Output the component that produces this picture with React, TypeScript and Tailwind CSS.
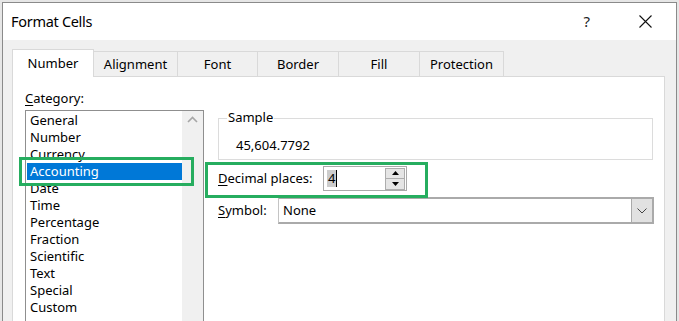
import React from "react";

const items = [
  "General",
  "Number",
  "Currency",
  "Accounting",
  "Date",
  "Time",
  "Percentage",
  "Fraction",
  "Scientific",
  "Text",
  "Special",
  "Custom",
];

const tabs = ["Alignment", "Font", "Border", "Fill", "Protection"];
const tabWidths = ["w-[84px]", "w-[80px]", "w-[81px]", "w-[81px]", "w-[84px]"];

export default function App() {
  return (
    <div
      className="relative w-[679px] h-[321px] overflow-hidden bg-[#e6e6e6] pl-[2px] pt-[2px] text-black"
      style={{ fontFamily: '"Noto Sans", "Open Sans", sans-serif' }}
    >
      <div className="w-[675px] h-[340px] border-l border-r border-t border-[#8a8a8a] bg-[#f0f0f0]">
        {/* Title bar */}
        <div className="h-[37px] bg-white flex items-center pl-[8px] pr-[24px]">
          <div className="text-[14.5px] leading-none tracking-[-0.3px]">Format Cells</div>
          <div className="flex-1" />
          <div className="text-[15px] leading-none text-[#222] mr-[49px]">?</div>
          <svg width="13" height="13" viewBox="0 0 13 13">
            <path d="M0.5 0.5 L12.5 12.5 M12.5 0.5 L0.5 12.5" stroke="#111" strokeWidth="1.1" />
          </svg>
        </div>
        {/* Body */}
        <div className="pt-[9px] pl-[9px] pr-[11px]">
          {/* Tabs */}
          <div className="flex items-end h-[27px] text-[13px] relative z-10">
            <div className="w-[82px] h-[28px] -mb-px bg-white border border-b-0 border-[#d9d9d9] flex items-center justify-center pt-[1px]">
              Number
            </div>
            {tabs.map((t, i) => (
              <div
                key={t}
                className={`${tabWidths[i]} h-[25px] bg-[#f0f0f0] border border-l-0 border-b-0 border-[#d9d9d9] flex items-center justify-center pt-[1px]`}
              >
                {t}
              </div>
            ))}
          </div>
          {/* Panel */}
          <div className="relative bg-white border border-[#d9d9d9] h-[260px] pt-[13px] pl-[12px] flex text-[13px]">
            {/* Left column */}
            <div className="w-[179px] flex flex-col">
              <div className="h-[17px] leading-[17px] mb-[3px]">
                <span className="underline underline-offset-2">C</span>ategory:
              </div>
              <div className="border border-[#8f8f8f] h-[240px] flex">
                <div className="flex-1 pt-[1px] pl-[1px]">
                  {items.map((it) => (
                    <div
                      key={it}
                      className={`h-[17px] leading-[17px] pl-[3px] ${
                        it === "Accounting" ? "bg-[#0078d7] text-white" : ""
                      }`}
                    >
                      {it}
                    </div>
                  ))}
                </div>
                <div className="w-[21px] bg-[#f0f0f0] flex justify-center pt-[5px]">
                  <svg width="11" height="7" viewBox="0 0 11 7">
                    <path d="M1 6 L5.5 1.5 L10 6" stroke="#a6a6a6" strokeWidth="1.6" fill="none" />
                  </svg>
                </div>
              </div>
            </div>
            {/* Right column */}
            <div className="ml-[14px] pt-[28px] flex flex-col">
              <div className="relative w-[435px] h-[42px] border border-[#dcdcdc] pl-[17px] pt-[18px]">
                <div className="absolute left-[8px] top-[-10px] bg-white px-[1px] h-[17px] leading-[17px]">
                  Sample
                </div>
                <div className="h-[17px] leading-[17px]">45,604.7792</div>
              </div>
              <div className="mt-[6px] flex items-center h-[25px]">
                <div className="w-[105px]">
                  <span className="underline underline-offset-2">D</span>ecimal places:
                </div>
                <div className="w-[84px] h-[25px] border border-[#a9a9a9] flex items-center pl-[3px] pr-[1px]">
                  <div className="flex-1 flex items-center">
                    <span className="bg-[#cccccc] px-[1px] h-[17px] leading-[17px]">4</span>
                    <span className="w-px h-[17px] bg-black" />
                  </div>
                  <div className="flex flex-col w-[20px] gap-0">
                    <div className="h-[11px] bg-[#e5e5e5] border border-[#adadad] flex items-center justify-center">
                      <svg width="7" height="4" viewBox="0 0 7 4">
                        <path d="M0 4 L3.5 0 L7 4 Z" fill="#000" />
                      </svg>
                    </div>
                    <div className="h-[11px] bg-[#e5e5e5] border border-t-0 border-[#adadad] flex items-center justify-center">
                      <svg width="7" height="4" viewBox="0 0 7 4">
                        <path d="M0 0 L7 0 L3.5 4 Z" fill="#000" />
                      </svg>
                    </div>
                  </div>
                </div>
              </div>
              <div className="mt-[6px] flex items-center">
                <div className="w-[60px]">
                  <span className="underline underline-offset-2">S</span>ymbol:
                </div>
                <div className="w-[376px] h-[27px] border border-t-2 border-r-2 border-b-2 border-[#aaaaaa] border-l-[#c4c4c4] flex items-center">
                  <div className="flex-1 pl-[4px]">None</div>
                  <div className="w-[21px] h-full bg-[#e1e1e1] border-l border-[#aaaaaa] flex items-center justify-center">
                    <svg width="10" height="6" viewBox="0 0 10 6">
                      <path d="M0.5 0.5 L5 5 L9.5 0.5" stroke="#444" strokeWidth="1" fill="none" />
                    </svg>
                  </div>
                </div>
              </div>
            </div>
          </div>
        </div>
      </div>
      {/* Annotation boxes */}
      <div className="absolute left-[19px] top-[157px] w-[175px] h-[29px] border-[3px] border-[#26ad5f]" />
      <div className="absolute left-[205px] top-[162px] w-[223px] h-[36px] border-[3px] border-[#26ad5f]" />
    </div>
  );
}
